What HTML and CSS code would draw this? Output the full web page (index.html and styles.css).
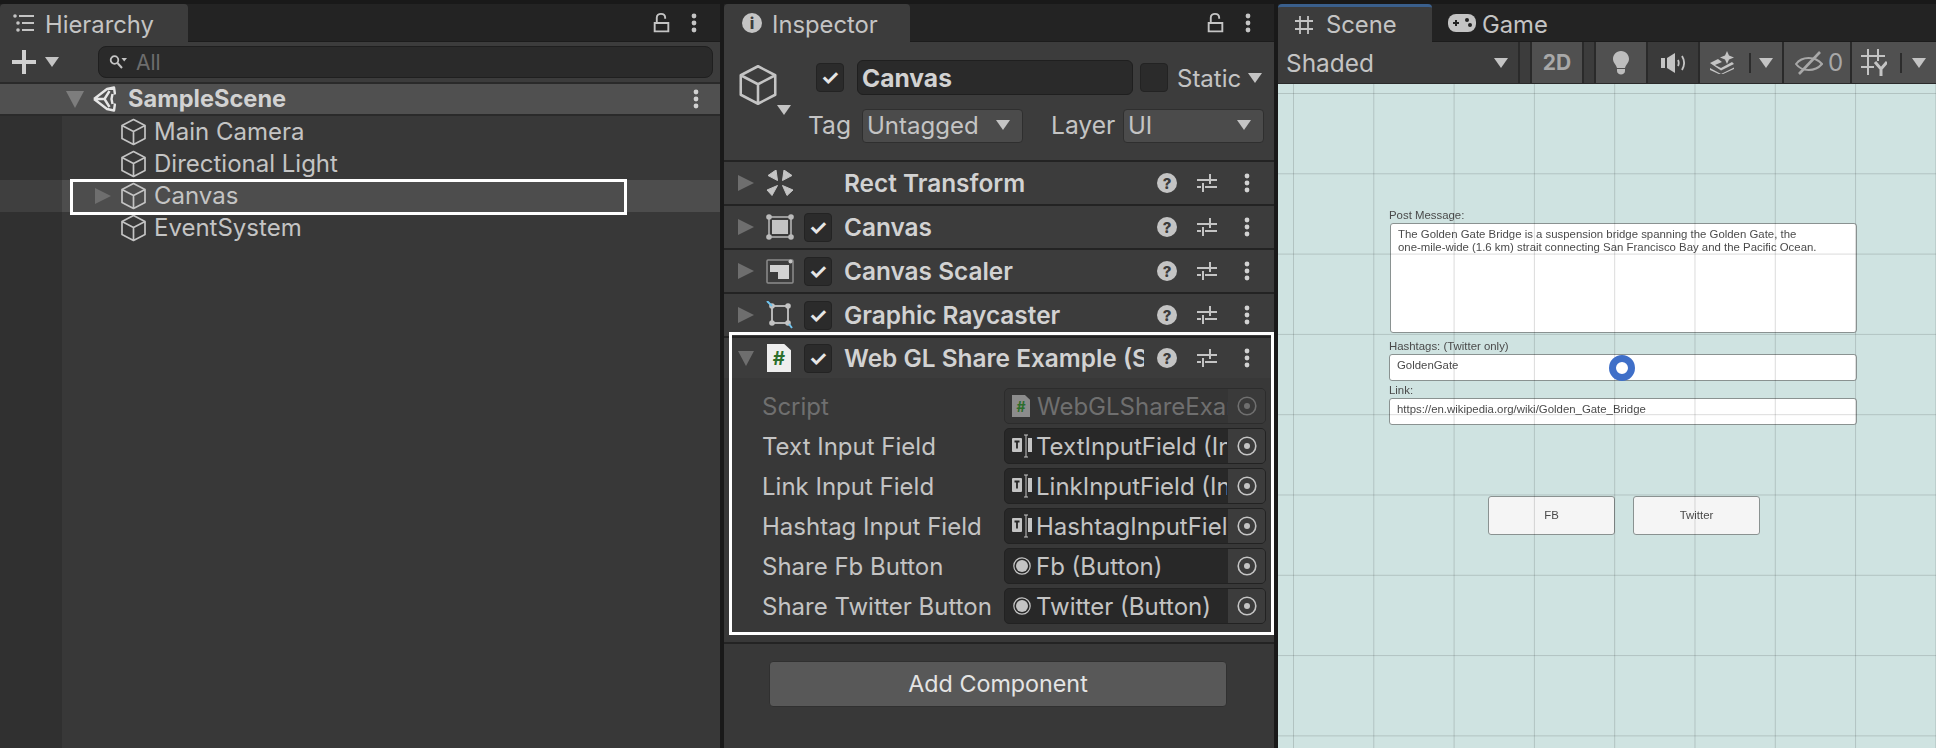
FILE: index.html
```html
<!DOCTYPE html>
<html lang="en">
<head>
    <meta charset="UTF-8">
    <meta name="viewport" content="width=device-width, initial-scale=1.0">
    <title>Unity Editor</title>
    <link rel="stylesheet" href="styles.css">
</head>

<body>
    <svg class="defs" width="0" height="0">
        <symbol id="cube" viewBox="0 0 26 28">
            <path d="M13 1.5 L24.5 7.5 V20.5 L13 26.5 L1.5 20.5 V7.5 Z M1.5 7.5 L13 13.5 L24.5 7.5 M13 13.5 V26.5" fill="none" stroke="currentColor" stroke-width="1.7" stroke-linejoin="round"/>
        </symbol>
        <symbol id="kebab" viewBox="0 0 6 20">
            <circle cx="3" cy="3" r="2.4" fill="currentColor"/>
            <circle cx="3" cy="10" r="2.4" fill="currentColor"/>
            <circle cx="3" cy="17" r="2.4" fill="currentColor"/>
        </symbol>
        <symbol id="lock" viewBox="0 0 16 20">
            <path d="M1.5 10.5 H14.5 V18.5 H1.5 Z M3.5 10 V5.5 C3.5 0.5 11.5 0.5 11.5 5.5 V6.5" fill="none" stroke="currentColor" stroke-width="1.8"/>
        </symbol>
        <symbol id="sliders" viewBox="0 0 20 20">
            <path d="M0 7 H20 M0 14 H4 M8 14 H20 M13 1 V11 M6 10 V19" fill="none" stroke="currentColor" stroke-width="2"/>
        </symbol>
        <symbol id="target" viewBox="0 0 20 20">
            <circle cx="10" cy="10" r="8.8" fill="none" stroke="currentColor" stroke-width="1.6"/>
            <circle cx="10" cy="10" r="3" fill="currentColor"/>
        </symbol>
        <symbol id="radio" viewBox="0 0 18 18">
            <circle cx="9" cy="9" r="8.2" fill="none" stroke="currentColor" stroke-width="1.2"/>
            <circle cx="9" cy="9" r="6" fill="currentColor"/>
        </symbol>
        <symbol id="text-input" viewBox="0 0 20 24">
            <rect x="0" y="4" width="10" height="14" rx="1" fill="currentColor"/>
            <path d="M2.500 7.500 H7.500 M5 7.500 V14.500" stroke="#262626" stroke-width="1.8" fill="none"/>
            <rect x="16" y="4" width="4" height="14" fill="currentColor"/>
            <path d="M12 1 H16 M14 1 V23 M12 23 H16" stroke="currentColor" stroke-width="1" fill="none"/>
        </symbol>
    </svg>

    <div class="editor">

        <section class="panel hierarchy">
            <div class="tab-bar">
                <div class="tab hierarchy-tab">
                    <svg class="tab-icon" width="21" height="18" viewBox="0 0 21 18"><path d="M6 2 H21 M9 9 H21 M9 16 H21" stroke="#c4c4c4" stroke-width="1.8"/><circle cx="2" cy="2" r="1.800" fill="#c4c4c4"/><circle cx="5" cy="9" r="1.800" fill="#c4c4c4"/><circle cx="5" cy="16" r="1.800" fill="#c4c4c4"/></svg>
                    <span>Hierarchy</span>
                </div>
                <div class="tab-actions">
                    <svg class="lock" width="17" height="21"><use href="#lock"/></svg>
                    <svg class="kebab" width="6" height="20"><use href="#kebab"/></svg>
                </div>
            </div>
            <div class="hierarchy-toolbar">
                <svg class="plus" width="24" height="24" viewBox="0 0 24 24"><path d="M0 12 H24 M12 0 V24" stroke="#d0d0d0" stroke-width="4"/></svg>
                <span class="tri tri-down add-tri"></span>
                <div class="search">
                    <svg width="18" height="16" viewBox="0 0 18 16"><circle cx="5.500" cy="6" r="3.800" fill="none" stroke="#c4c4c4" stroke-width="1.800"/><path d="M8.500 9 L13 14" stroke="#c4c4c4" stroke-width="2"/><path d="M12.500 4 H18 L15.200 7.500 Z" fill="#c4c4c4"/></svg>
                    <span>All</span>
                </div>
            </div>
            <div class="scene-row">
                <span class="tri tri-down scene-tri"></span>
                <svg class="unity-logo" width="24" height="26" viewBox="0 0 24 26"><path d="M2 13 L15 3 L22 1.500 L23 8.500 M2 13 L15 23 L22 24.500 L23 17.500 M2 13 H12.500 L17.500 5 M12.500 13 L17.500 21 M20.500 8 L19.500 13 L20.500 18" fill="none" stroke="#e6e6e6" stroke-width="2.400" stroke-linejoin="round"/></svg>
                <span class="scene-name">SampleScene</span>
                <svg class="kebab" width="6" height="20"><use href="#kebab"/></svg>
            </div>
            <div class="tree">
                <div class="tree-row">
                    <svg class="cube" width="27" height="28"><use href="#cube"/></svg>
                    <span class="tree-name">Main Camera</span>
                </div>
                <div class="tree-row">
                    <svg class="cube" width="27" height="28"><use href="#cube"/></svg>
                    <span class="tree-name">Directional Light</span>
                </div>
                <div class="tree-row tree-row-hover">
                    <span class="tri tri-right tree-tri"></span>
                    <svg class="cube" width="27" height="28"><use href="#cube"/></svg>
                    <span class="tree-name">Canvas</span>
                </div>
                <div class="tree-row">
                    <svg class="cube" width="27" height="28"><use href="#cube"/></svg>
                    <span class="tree-name">EventSystem</span>
                </div>
            </div>
            <div class="mark canvas-mark"></div>
        </section>

        <section class="panel inspector">
            <div class="tab-bar">
                <div class="tab inspector-tab">
                    <span class="info-icon">i</span>
                    <span>Inspector</span>
                </div>
                <div class="tab-actions">
                    <svg class="lock" width="17" height="21"><use href="#lock"/></svg>
                    <svg class="kebab" width="6" height="20"><use href="#kebab"/></svg>
                </div>
            </div>

            <div class="go-header">
                <div class="go-icon">
                    <svg class="go-cube" width="40" height="42"><use href="#cube"/></svg>
                    <span class="tri tri-down go-tri"></span>
                </div>
                <div class="go-line">
                    <span class="check">✓</span>
                    <div class="go-name">Canvas</div>
                    <span class="check check-off"></span>
                    <span class="static-label">Static</span>
                    <span class="tri tri-down"></span>
                </div>
                <div class="go-line go-line-tag">
                    <span class="tag-label">Tag</span>
                    <div class="dropdown tag-dropdown"><span>Untagged</span><span class="tri tri-down"></span></div>
                    <span class="layer-label">Layer</span>
                    <div class="dropdown layer-dropdown"><span>UI</span><span class="tri tri-down"></span></div>
                </div>
            </div>

            <div class="comp-list">
                <div class="comp-row">
                    <span class="tri tri-right"></span>
                    <svg class="comp-icon" width="26" height="26" viewBox="0 0 26 26"><path d="M10.500 10.500 L1 5.500 L9 0 Z M15.500 10.500 L17 0 L25 5.500 Z M10.500 15.500 L0 20 L5 25.500 Z M15.500 15.500 L26 20 L20 25.500 Z" fill="#c4c4c4" stroke="#c4c4c4" stroke-width="1" stroke-linejoin="round"/></svg>
                    <span class="comp-check-slot"></span>
                    <span class="comp-title">Rect Transform</span>
                    <span class="help">?</span>
                    <svg class="sliders" width="20" height="20"><use href="#sliders"/></svg>
                    <svg class="kebab" width="6" height="20"><use href="#kebab"/></svg>
                </div>
                <div class="comp-row">
                    <span class="tri tri-right"></span>
                    <svg class="comp-icon" width="28" height="26" viewBox="0 0 28 26"><rect x="3" y="3" width="22" height="20" fill="none" stroke="#bbb" stroke-width="1.500"/><rect x="6" y="6" width="16" height="14" fill="#c4c4c4"/><circle cx="3" cy="3" r="2.800" fill="#bbb"/><circle cx="25" cy="3" r="2.800" fill="#bbb"/><circle cx="3" cy="23" r="2.800" fill="#bbb"/><circle cx="25" cy="23" r="2.800" fill="#bbb"/></svg>
                    <span class="check">✓</span>
                    <span class="comp-title">Canvas</span>
                    <span class="help">?</span>
                    <svg class="sliders" width="20" height="20"><use href="#sliders"/></svg>
                    <svg class="kebab" width="6" height="20"><use href="#kebab"/></svg>
                </div>
                <div class="comp-row">
                    <span class="tri tri-right"></span>
                    <svg class="comp-icon" width="28" height="26" viewBox="0 0 28 26"><rect x="1" y="2" width="26" height="23" rx="1" fill="none" stroke="#8c8c8c" stroke-width="1.500"/><path d="M4 7 H23 V21 H12 V14 H4 Z" fill="#d2d2d2"/><circle cx="24.500" cy="3.500" r="2" fill="#c4c4c4"/></svg>
                    <span class="check">✓</span>
                    <span class="comp-title">Canvas Scaler</span>
                    <span class="help">?</span>
                    <svg class="sliders" width="20" height="20"><use href="#sliders"/></svg>
                    <svg class="kebab" width="6" height="20"><use href="#kebab"/></svg>
                </div>
                <div class="comp-row">
                    <span class="tri tri-right"></span>
                    <svg class="comp-icon" width="28" height="28" viewBox="0 0 28 28"><rect x="6" y="5" width="16" height="17" fill="none" stroke="#c4c4c4" stroke-width="1.800"/><circle cx="6" cy="5" r="2.800" fill="#c4c4c4"/><circle cx="22" cy="5" r="2.800" fill="#c4c4c4"/><circle cx="6" cy="22" r="2.800" fill="#c4c4c4"/><circle cx="22" cy="22" r="2.800" fill="#c4c4c4"/><path d="M1 0 L6 5 M23 23 L26 27" stroke="#6fc3ee" stroke-width="2"/></svg>
                    <span class="check">✓</span>
                    <span class="comp-title">Graphic Raycaster</span>
                    <span class="help">?</span>
                    <svg class="sliders" width="20" height="20"><use href="#sliders"/></svg>
                    <svg class="kebab" width="6" height="20"><use href="#kebab"/></svg>
                </div>
                <div class="comp-row comp-row-open">
                    <span class="tri tri-down comp-tri-open"></span>
                    <span class="script-icon">#</span>
                    <span class="check">✓</span>
                    <span class="comp-title comp-title-clip">Web GL Share Example (Script)</span>
                    <span class="help">?</span>
                    <svg class="sliders" width="20" height="20"><use href="#sliders"/></svg>
                    <svg class="kebab" width="6" height="20"><use href="#kebab"/></svg>
                </div>
                <div class="comp-body">
                    <div class="field-row field-row-off">
                        <span class="field-label">Script</span>
                        <div class="field">
                            <span class="script-icon script-icon-small">#</span>
                            <span class="field-text">WebGLShareExample</span>
                            <span class="picker"><svg width="20" height="20"><use href="#target"/></svg></span>
                        </div>
                    </div>
                    <div class="field-row">
                        <span class="field-label">Text Input Field</span>
                        <div class="field">
                            <svg class="field-icon" width="20" height="24"><use href="#text-input"/></svg>
                            <span class="field-text">TextInputField (InputField)</span>
                            <span class="picker"><svg width="20" height="20"><use href="#target"/></svg></span>
                        </div>
                    </div>
                    <div class="field-row">
                        <span class="field-label">Link Input Field</span>
                        <div class="field">
                            <svg class="field-icon" width="20" height="24"><use href="#text-input"/></svg>
                            <span class="field-text">LinkInputField (InputField)</span>
                            <span class="picker"><svg width="20" height="20"><use href="#target"/></svg></span>
                        </div>
                    </div>
                    <div class="field-row">
                        <span class="field-label">Hashtag Input Field</span>
                        <div class="field">
                            <svg class="field-icon" width="20" height="24"><use href="#text-input"/></svg>
                            <span class="field-text">HashtagInputField (InputField)</span>
                            <span class="picker"><svg width="20" height="20"><use href="#target"/></svg></span>
                        </div>
                    </div>
                    <div class="field-row">
                        <span class="field-label">Share Fb Button</span>
                        <div class="field">
                            <svg class="field-icon" width="18" height="18"><use href="#radio"/></svg>
                            <span class="field-text">Fb (Button)</span>
                            <span class="picker"><svg width="20" height="20"><use href="#target"/></svg></span>
                        </div>
                    </div>
                    <div class="field-row">
                        <span class="field-label">Share Twitter Button</span>
                        <div class="field">
                            <svg class="field-icon" width="18" height="18"><use href="#radio"/></svg>
                            <span class="field-text">Twitter (Button)</span>
                            <span class="picker"><svg width="20" height="20"><use href="#target"/></svg></span>
                        </div>
                    </div>
                </div>
            </div>

            <div class="add-area">
                <button class="add-button">Add Component</button>
            </div>
            <div class="mark script-mark"></div>
        </section>

        <section class="panel scene">
            <div class="tab-bar">
                <div class="tab scene-tab">
                    <svg class="tab-icon" width="20" height="20" viewBox="0 0 20 20"><path d="M6 1 V19 M14 1 V19 M1 6 H19 M1 14 H19" stroke="#c4c4c4" stroke-width="1.800"/></svg>
                    <span>Scene</span>
                </div>
                <div class="tab game-tab">
                    <svg class="tab-icon" width="28" height="18" viewBox="0 0 28 18"><rect x="0" y="0" width="28" height="18" rx="8" fill="#c4c4c4"/><path d="M5 9 H11 M8 6 V12" stroke="#232323" stroke-width="2"/><circle cx="19" cy="6" r="2" fill="#232323"/><circle cx="22" cy="11" r="2" fill="#232323"/></svg>
                    <span>Game</span>
                </div>
            </div>
            <div class="scene-toolbar">
                <div class="tool tool-shaded"><span>Shaded</span><span class="tri tri-down"></span></div>
                <div class="tool tool-grip"></div>
                <div class="tool tool-2d">2D</div>
                <div class="tool tool-grip"></div>
                <div class="tool tool-square tool-on">
                    <svg width="18" height="24" viewBox="0 0 18 24"><path d="M9 0 C14 0 17 4 17 8 C17 12 14 13 13 17 H5 C4 13 1 12 1 8 C1 4 4 0 9 0 Z" fill="#bdbdbd"/><path d="M5 18 H13 V20 C13 24.500 5 24.500 5 20 Z" fill="#bdbdbd"/></svg>
                </div>
                <div class="tool tool-square tool-off">
                    <svg width="24" height="20" viewBox="0 0 24 20"><rect x="0" y="5" width="4" height="10" fill="#c4c4c4"/><path d="M6 5 L14 0 V20 L6 15 Z" fill="#c4c4c4"/><path d="M17 7 C18 9 18 11 17 13 M21 3 C24 8 24 12 21 17" stroke="#c4c4c4" stroke-width="1.800" fill="none"/></svg>
                </div>
                <div class="tool tool-fx">
                    <svg width="24" height="23" viewBox="0 0 24 23"><path d="M0 12 L8 8 L12 11 L5 14 L11 17 L22 11 L24 13 L11 19.500 Z M0 17 L11 23 L24 16.500 L24 18 L11 24 L0 19 Z" fill="#c4c4c4"/><path d="M17 0 L19 4.500 L24 6.500 L19 8.500 L17 13 L15 8.500 L10 6.500 L15 4.500 Z" fill="#c4c4c4"/></svg>
                    <span class="tool-sep fx-sep"></span>
                    <span class="tri tri-down"></span>
                </div>
                <div class="tool tool-eye">
                    <svg width="28" height="24" viewBox="0 0 28 24"><path d="M1 13 C7 5 20 5 27 13 C20 21 7 21 1 13 Z" fill="none" stroke="#a8a8a8" stroke-width="2"/><path d="M4 23 L25 1" stroke="#a8a8a8" stroke-width="2.600"/></svg>
                    <span>0</span>
                </div>
                <div class="tool tool-gizmo">
                    <svg width="26" height="27" viewBox="0 0 26 27"><path d="M7 0 V26 M17 0 V12 M0 7 H24 M0 18 H13" stroke="#c4c4c4" stroke-width="2"/><path d="M14 13 L20 20 L26 13 M20 20 V27" stroke="#c4c4c4" stroke-width="3" fill="none"/></svg>
                    <span class="tool-sep gizmo-sep"></span>
                    <span class="tri tri-down"></span>
                </div>
            </div>
            <div class="scene-view">
                <div class="game-ui">
                    <div class="ui-label">Post Message:</div>
                    <div class="ui-input ui-input-big">The Golden Gate Bridge is a suspension bridge spanning the Golden Gate, the<br>one-mile-wide (1.6 km) strait connecting San Francisco Bay and the Pacific Ocean.</div>
                    <div class="ui-label ui-label-second">Hashtags: (Twitter only)</div>
                    <div class="ui-input">GoldenGate</div>
                    <div class="ui-label ui-label-third">Link:</div>
                    <div class="ui-input">https://en.wikipedia.org/wiki/Golden_Gate_Bridge</div>
                    <div class="ui-buttons">
                        <div class="ui-button">FB</div>
                        <div class="ui-button">Twitter</div>
                    </div>
                </div>
                <div class="scene-grid"></div>
                <div class="busy-ring"></div>
            </div>
        </section>

    </div>
</body>
</html>
```

FILE: styles.css
```css
*
{
    box-sizing: border-box;
}

html, body
{
    margin: 0;
    height: 100%;
    overflow: hidden;
}

body
{
    background-color: #191919;
    color: #c4c4c4;
    font-family: Inter, "Liberation Sans", sans-serif;
    font-size: 24px;
}

.defs
{
    position: absolute;
}

.editor
{
    display: flex;
    gap: 4px;
    height: 748px;
    padding-top: 4px;
}

.panel
{
    position: relative;
    display: flex;
    flex-direction: column;
    background-color: #383838;
    overflow: hidden;
}

.hierarchy
{
    width: 720px;
}

.inspector
{
    width: 550px;
}

.scene
{
    width: 658px;
}

/* tabs */

.tab-bar
{
    display: flex;
    justify-content: space-between;
    align-items: center;
    flex: none;
    height: 38px;
    background-color: #232323;
    border-bottom: 1px solid #1c1c1c;
}

.tab
{
    display: flex;
    align-items: center;
    height: 38px;
    margin-bottom: -1px;
    padding-top: 3px;
    background-color: #3c3c3c;
    border-top-left-radius: 4px;
    border-top-right-radius: 4px;
    font-size: 23.8px;
    white-space: nowrap;
}

.hierarchy-tab
{
    width: 188px;
    gap: 11px;
    padding-left: 13px;
}

.inspector-tab
{
    width: 186px;
    gap: 10px;
    padding-left: 18px;
}

.scene-tab
{
    width: 154px;
    gap: 12px;
    padding-left: 16px;
    padding-top: 0;
    border-top: 3px solid #3a5f8c;
}

.game-tab
{
    background-color: transparent;
    gap: 6px;
    padding-left: 16px;
}

.scene .tab-bar
{
    justify-content: flex-start;
}

.tab-actions
{
    display: flex;
    align-items: center;
    gap: 21px;
    padding-right: 23px;
}

.tab-icon
{
    margin-top: -3px;
}

.scene-tab .tab-icon
{
    margin-top: 0;
}

.info-icon
{
    display: flex;
    justify-content: center;
    align-items: center;
    width: 20px;
    height: 20px;
    margin-top: -3px;
    border-radius: 50%;
    background-color: #c4c4c4;
    color: #3c3c3c;
    font-size: 16px;
    font-weight: 800;
}

/* little triangles */

.tri
{
    display: inline-block;
    flex: none;
}

.tri-down
{
    width: 0;
    height: 0;
    border-left: 7px solid transparent;
    border-right: 7px solid transparent;
    border-top: 10px solid #c4c4c4;
}

.tri-right
{
    width: 0;
    height: 0;
    border-top: 8px solid transparent;
    border-bottom: 8px solid transparent;
    border-left: 16px solid #6e6e6e;
}

/* hierarchy */

.hierarchy-toolbar
{
    display: flex;
    align-items: center;
    flex: none;
    height: 42px;
    padding-left: 12px;
    background-color: #3c3c3c;
    border-bottom: 2px solid #2a2a2a;
}

.add-tri
{
    margin-left: 9px;
}

.search
{
    display: flex;
    align-items: center;
    gap: 9px;
    width: 615px;
    height: 32px;
    margin-left: 39px;
    padding-left: 10px;
    background-color: #2a2a2a;
    border: 1px solid #1f1f1f;
    border-radius: 8px;
    color: #6d6d6d;
    font-size: 21px;
}

.scene-row
{
    display: flex;
    align-items: center;
    flex: none;
    height: 30px;
    padding-left: 66px;
    background-color: #505050;
    font-size: 23.6px;
    font-weight: 700;
    color: #d2d2d2;
}

.scene-tri
{
    border-left-width: 9px;
    border-right-width: 9px;
    border-top: 17px solid #7d7d7d;
}

.unity-logo
{
    margin-left: 8px;
}

.scene-name
{
    margin-left: 12px;
    margin-top: -2px;
    flex: 1;
}

.scene-row .kebab
{
    margin-right: 21px;
}

.tree
{
    flex: 1;
    background: linear-gradient(to right, #303030 62px, #383838 62px);
    border-top: 2px solid #2a2a2a;
}

.tree-row
{
    display: flex;
    align-items: center;
    gap: 7px;
    height: 32px;
    padding-left: 120px;
}

.tree-name
{
    margin-top: -2px;
}

.tree-row-hover
{
    position: relative;
    background: linear-gradient(to right, #3f3f3f 62px, #4d4d4d 62px);
}

.tree-tri
{
    position: absolute;
    left: 95px;
    top: 8px;
}

.mark
{
    position: absolute;
    border: 3px solid #ffffff;
}

.canvas-mark
{
    left: 70px;
    top: 175px;
    width: 557px;
    height: 36px;
}

/* inspector */

.go-header
{
    display: grid;
    grid-template-columns: 85px 1fr;
    align-content: start;
    row-gap: 14px;
    flex: none;
    height: 118px;
    padding-top: 18px;
    background-color: #3c3c3c;
}

.go-icon
{
    position: relative;
    grid-row: 1 / 3;
    padding: 4px 0 0 14px;
    color: #c4c4c4;
}

.go-cube
{
    display: block;
}

.go-tri
{
    position: absolute;
    left: 53px;
    top: 45px;
}

.go-line
{
    display: flex;
    align-items: center;
    height: 35px;
    padding-left: 7px;
}

.go-line-tag
{
    height: 34px;
    padding-left: 0;
}

.tag-label
{
    flex: none;
    width: 53px;
    margin-top: -2px;
    margin-left: -1px;
    font-size: 24.6px;
}

.check
{
    display: flex;
    justify-content: center;
    align-items: center;
    flex: none;
    width: 28px;
    height: 29px;
    background-color: #2b2b2b;
    border: 1px solid #232323;
    border-radius: 4px;
    color: #e6e6e6;
    font-size: 21px;
    font-weight: 700;
}

.check-off
{
    margin-left: 7px;
}

.go-name
{
    width: 276px;
    height: 35px;
    margin-left: 13px;
    padding-left: 4px;
    background-color: #2a2a2a;
    border: 1px solid #1f1f1f;
    border-radius: 6px;
    color: #d2d2d2;
    font-size: 24.6px;
    font-weight: 700;
    line-height: 35px;
}

.static-label
{
    margin: 0 7px 0 9px;
    padding-top: 1px;
}

.dropdown
{
    display: flex;
    justify-content: space-between;
    align-items: center;
    height: 34px;
    padding: 0 12px 2px 4px;
    background-color: #4b4b4b;
    border: 1px solid #2f2f2f;
    border-radius: 4px;
}

.tag-dropdown
{
    width: 161px;
    margin-left: 1px;
}

.layer-label
{
    flex: none;
    width: 72px;
    margin-top: -2px;
    margin-left: 28px;
    font-size: 24.6px;
}

.layer-dropdown
{
    width: 141px;
}

.comp-list
{
    display: flex;
    flex-direction: column;
    gap: 2px;
    flex: none;
    padding: 2px 0;
    background-color: #232323;
}

.comp-row
{
    display: flex;
    align-items: center;
    height: 42px;
    padding-left: 14px;
    background-color: #3c3c3c;
    font-size: 24.4px;
    font-weight: 600;
    color: #d2d2d2;
}

.comp-row-open
{
    height: 40px;
}

.comp-icon
{
    flex: none;
    margin-left: 12px;
    margin-right: 10px;
    width: 28px;
}

.comp-check-slot
{
    flex: none;
    width: 28px;
}

.comp-title
{
    flex: none;
    width: 300px;
    margin-left: 12px;
    margin-top: -1px;
    white-space: nowrap;
    overflow: hidden;
}

.comp-tri-open
{
    border-left-width: 8px;
    border-right-width: 8px;
    border-top: 15px solid #6e6e6e;
}

.help
{
    display: flex;
    justify-content: center;
    align-items: center;
    flex: none;
    width: 20px;
    height: 20px;
    margin-left: 13px;
    border-radius: 50%;
    background-color: #c4c4c4;
    color: #3c3c3c;
    font-size: 15px;
    font-weight: 800;
}

.sliders
{
    flex: none;
    margin-left: 20px;
    color: #c4c4c4;
}

.comp-row .kebab
{
    flex: none;
    margin-left: 27px;
}

.script-icon
{
    display: flex;
    justify-content: center;
    align-items: center;
    flex: none;
    width: 24px;
    height: 28px;
    margin-left: 13px;
    margin-right: 13px;
    background-color: #eeeeee;
    clip-path: polygon(0 0, 72% 0, 100% 22%, 100% 100%, 0 100%);
    color: #2c6e2c;
    font-size: 19px;
    font-weight: 700;
}

.script-icon-small
{
    width: 18px;
    height: 22px;
    margin: 0 3px 0 0;
    background-color: #8c8c8c;
    font-size: 14px;
}

.comp-body
{
    display: flex;
    flex-direction: column;
    gap: 4px;
    margin-top: -2px;
    padding: 10px 8px 18px 38px;
    background-color: #383838;
}

.field-row
{
    display: flex;
    align-items: center;
    justify-content: space-between;
    height: 36px;
}

.field-row-off
{
    color: #6f6f6f;
}

.field-label
{
    padding-top: 1px;
    white-space: nowrap;
}

.field
{
    display: flex;
    align-items: center;
    position: relative;
    flex: none;
    width: 262px;
    height: 36px;
    padding-left: 7px;
    background-color: #282828;
    border: 1px solid #222222;
    border-radius: 5px;
    overflow: hidden;
}

.field-row-off .field
{
    background-color: #353535;
    border-color: #2c2c2c;
}

.field-icon
{
    flex: none;
    width: 20px;
    color: #c4c4c4;
}

.field-text
{
    width: 191px;
    margin-left: 4px;
    padding-top: 1px;
    white-space: nowrap;
    overflow: hidden;
}

.picker
{
    display: flex;
    justify-content: center;
    align-items: center;
    position: absolute;
    right: 0;
    top: 0;
    width: 37px;
    height: 34px;
    background-color: #3c3c3c;
}

.field-row-off .picker
{
    background-color: #3a3a3a;
}

.add-area
{
    flex: 1;
    padding: 17px 0 0 45px;
}

.add-button
{
    width: 458px;
    height: 46px;
    padding: 0 0 2px;
    background-color: #585858;
    border: 1px solid #303030;
    border-radius: 4px;
    color: #e4e4e4;
    font-family: inherit;
    font-size: 23.3px;
}

.script-mark
{
    left: 5px;
    top: 328px;
    width: 545px;
    height: 303px;
}

/* scene */

.scene-toolbar
{
    display: flex;
    gap: 2px;
    flex: none;
    height: 42px;
    padding-bottom: 1px;
    background-color: #2a2a2a;
}

.tool
{
    display: flex;
    align-items: center;
    justify-content: center;
    flex: none;
    background-color: #505050;
}

.tool-off
{
    background-color: #3a3a3a;
}

.tool-shaded
{
    justify-content: space-between;
    width: 240px;
    padding: 0 10px 0 8px;
    background-color: #3c3c3c;
    font-size: 24.4px;
}

.tool-grip
{
    width: 10px;
    background-color: #3c3c3c;
}

.tool-2d
{
    width: 50px;
    font-weight: 700;
    font-size: 21px;
    color: #a8a8a8;
}

.tool-square
{
    width: 50px;
}

.tool-fx
{
    justify-content: flex-start;
    width: 82px;
    padding-left: 10px;
}

.tool-eye
{
    justify-content: flex-start;
    gap: 5px;
    width: 66px;
    padding-left: 11px;
    color: #a8a8a8;
}

.tool-gizmo
{
    justify-content: flex-start;
    width: 84px;
    padding-left: 9px;
}

.tool-sep
{
    flex: none;
    width: 2px;
    height: 20px;
    margin-right: 8px;
    background-color: #2c2c2c;
}

.fx-sep
{
    margin-left: 15px;
}

.gizmo-sep
{
    margin-left: 13px;
    margin-right: 10px;
}

.scene-view
{
    position: relative;
    flex: 1;
    background-color: #cfe3e1;
    overflow: hidden;
}

.scene-grid
{
    position: absolute;
    left: 0;
    top: 0;
    right: 0;
    bottom: 0;
    background-image:
        linear-gradient(to right, rgba(0, 0, 0, 0.14) 1px, transparent 1px),
        linear-gradient(to bottom, rgba(0, 0, 0, 0.14) 1px, transparent 1px);
    background-size: 80.3px 80.3px;
    background-position: 15px 9px;
}

.game-ui
{
    width: 468px;
    margin-left: 111px;
    padding-top: 124px;
    color: #4a4a4a;
    font-family: "Liberation Sans", sans-serif;
    font-size: 11.4px;
    filter: blur(0.3px);
}

.ui-label
{
    height: 15px;
    line-height: 15px;
}

.ui-label-second
{
    margin-top: 6px;
}

.ui-label-third
{
    margin-top: 2px;
}

.ui-input
{
    height: 27px;
    padding: 4px 7px;
    background-color: #ffffff;
    border: 1px solid #8a9291;
    border-radius: 3px;
    line-height: 13px;
}

.ui-input-big
{
    height: 110px;
    margin-left: 1px;
}

.ui-buttons
{
    display: flex;
    gap: 18px;
    margin: 71px 0 0 99px;
}

.ui-button
{
    width: 127px;
    height: 39px;
    background-color: #f5f5f5;
    border: 1px solid #8a9291;
    border-radius: 3px;
    line-height: 37px;
    text-align: center;
}

.busy-ring
{
    position: absolute;
    left: 331px;
    top: 271px;
    width: 26px;
    height: 26px;
    background-color: #ffffff;
    border: 7px solid #3f6fc8;
    border-radius: 50%;
    filter: blur(0.7px);
}
```
